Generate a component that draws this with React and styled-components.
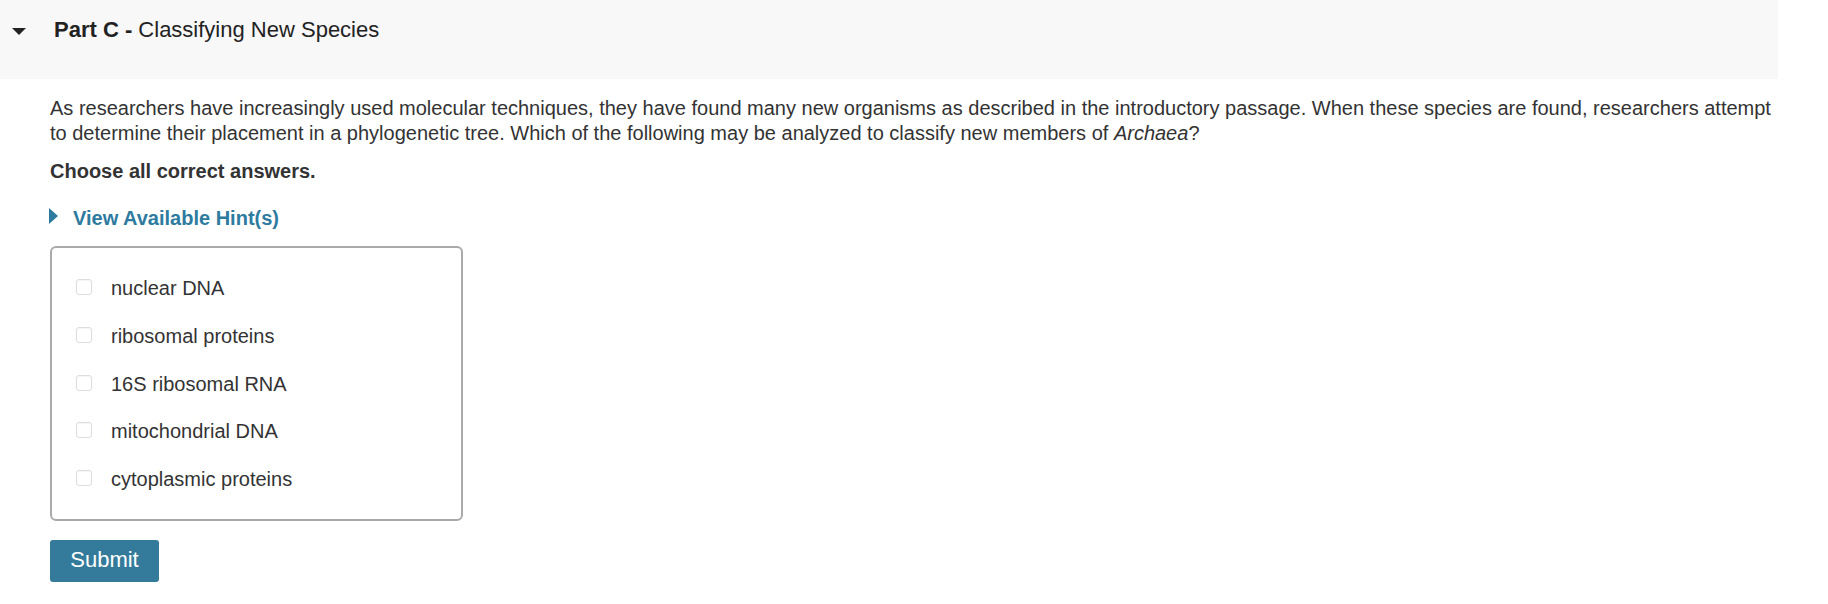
import React from "react";
import styled, { createGlobalStyle } from "styled-components";

const Global = createGlobalStyle`
  html, body { margin: 0; padding: 0; background: #fff; }
  body { font-family: "Liberation Sans", Arial, sans-serif; color: #333; }
`;

const Page = styled.div`
  width: 1828px;
`;

const Header = styled.div`
  width: 1778px;
  height: 79px;
  background: #f8f8f8;
  display: flex;
  align-items: flex-start;
  padding-top: 17px;
  box-sizing: border-box;
`;

const Caret = styled.span`
  width: 0;
  height: 0;
  margin: 11px 0 0 12px;
  border-left: 7.5px solid transparent;
  border-right: 7.5px solid transparent;
  border-top: 7px solid #222;
`;

const Title = styled.h2`
  margin: 0 0 0 28px;
  font-size: 22px;
  font-weight: normal;
  line-height: 26px;
  color: #222;
  b { font-weight: bold; }
`;

const Body = styled.div`
  padding: 17px 0 0 50px;
  width: 1728px;
`;

const Prompt = styled.p`
  margin: 0;
  font-size: 20px;
  line-height: 24.5px;
  color: #333;
`;

const Instruction = styled.p`
  margin: 14px 0 0;
  font-size: 20px;
  line-height: 24.5px;
  font-weight: bold;
  color: #333;
`;

const Hint = styled.div`
  margin-top: 22px;
  display: flex;
  align-items: center;
  gap: 15px;
  color: #2e7ba0;
  font-size: 20px;
  font-weight: bold;
  line-height: 24.5px;
  cursor: pointer;
`;

const HintCaret = styled.span`
  width: 0;
  height: 0;
  border-top: 8px solid transparent;
  border-bottom: 8px solid transparent;
  border-left: 9px solid #2e7ba0;
  margin-left: -1px;
  margin-top: -3px;
`;

const Options = styled.div`
  margin-top: 16px;
  width: 413px;
  box-sizing: border-box;
  border: 2px solid #aaa;
  border-radius: 6px;
  padding: 28px 0 28px 24px;
  display: flex;
  flex-direction: column;
  gap: 23.75px;
`;

const Option = styled.label`
  display: flex;
  align-items: center;
  gap: 19px;
  font-size: 20px;
  line-height: 24px;
  color: #333;
`;

const Box = styled.span`
  width: 16px;
  height: 16px;
  box-sizing: border-box;
  border: 1px solid #ddd;
  border-radius: 3px;
  background: #fff;
  box-shadow: inset 0 1px 1px rgba(0,0,0,0.04);
  margin-top: -2px;
  flex: none;
`;

const Submit = styled.button`
  margin-top: 19px;
  width: 109px;
  height: 42px;
  background: #347b9b;
  color: #fff;
  border: none;
  border-radius: 3px;
  font-family: "Liberation Sans", Arial, sans-serif;
  font-size: 22px;
  padding: 0 0 2px;
  display: block;
`;

const options = [
  "nuclear DNA",
  "ribosomal proteins",
  "16S ribosomal RNA",
  "mitochondrial DNA",
  "cytoplasmic proteins",
];

export default function App() {
  return (
    <Page>
      <Global />
      <Header>
        <Caret />
        <Title>
          <b>Part C -</b> Classifying New Species
        </Title>
      </Header>
      <Body>
        <Prompt>
          As researchers have increasingly used molecular techniques, they have found many new organisms as described in the introductory passage. When these species are found, researchers attempt to determine their placement in a phylogenetic tree. Which of the following may be analyzed to classify new members of <i>Archaea</i>?
        </Prompt>
        <Instruction>Choose all correct answers.</Instruction>
        <Hint>
          <HintCaret />
          View Available Hint(s)
        </Hint>
        <Options>
          {options.map((o) => (
            <Option key={o}>
              <Box />
              {o}
            </Option>
          ))}
        </Options>
        <Submit>Submit</Submit>
      </Body>
    </Page>
  );
}
